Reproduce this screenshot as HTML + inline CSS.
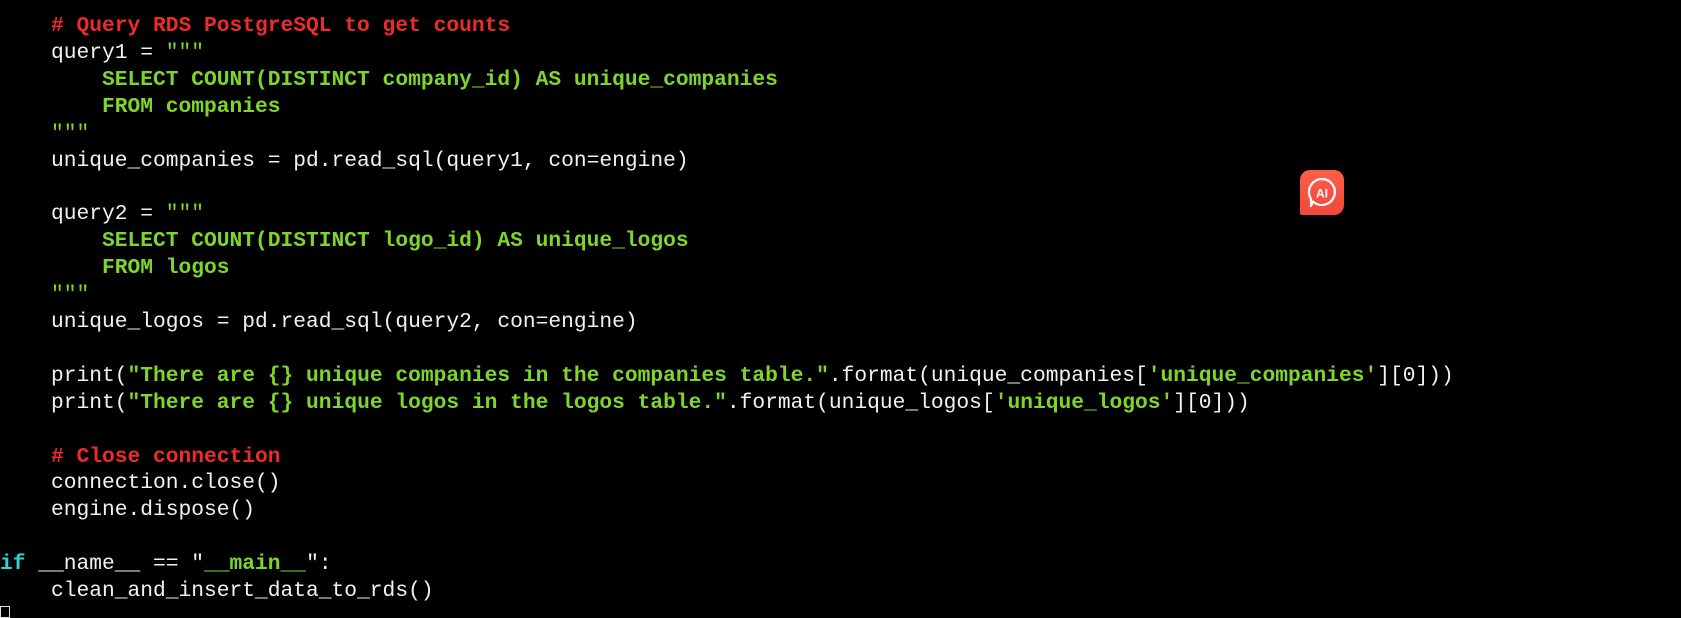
<!DOCTYPE html>
<html><head><meta charset="utf-8"><style>
html,body{margin:0;padding:0;background:#000;width:1681px;height:616px;overflow:hidden}
pre{margin:0;position:absolute;left:0;top:13px;font-family:"Liberation Mono",monospace;font-size:21.25px;line-height:26.9px;color:#f2f2f2;white-space:pre}
.r{color:#ee2b2b;font-weight:bold}
.g{color:#7ed62c;font-weight:bold}
.q{color:#7ed62c}
.c{color:#2fd3d3;font-weight:bold}
.icon{position:absolute;left:1300px;top:170px;width:44px;height:45px;border-radius:10px 10px 10px 2px;background:linear-gradient(180deg,#ff5f4a,#f2473a)}
.cur{position:absolute;left:0;top:606px;width:10px;height:12px;border:1px solid #ddd;box-sizing:border-box}
</style></head><body>
<pre><span class="r">    # Query RDS PostgreSQL to get counts</span>
    query1 = <span class="q">"""</span>
<span class="g">        SELECT COUNT(DISTINCT company_id) AS unique_companies</span>
<span class="g">        FROM companies</span>
<span class="q">    """</span>
    unique_companies = pd.read_sql(query1, con=engine)

    query2 = <span class="q">"""</span>
<span class="g">        SELECT COUNT(DISTINCT logo_id) AS unique_logos</span>
<span class="g">        FROM logos</span>
<span class="q">    """</span>
    unique_logos = pd.read_sql(query2, con=engine)

    print(<span class="g">"There are {} unique companies in the companies table."</span>.format(unique_companies[<span class="g">'unique_companies'</span>][0]))
    print(<span class="g">"There are {} unique logos in the logos table."</span>.format(unique_logos[<span class="g">'unique_logos'</span>][0]))

<span class="r">    # Close connection</span>
    connection.close()
    engine.dispose()

<span class="c">if</span> __name__ == "<span class="g">__main__</span>":
    clean_and_insert_data_to_rds()</pre>
<div class="icon"><svg width="44" height="45" viewBox="0 0 44 45"><path d="M22 9a13 13 0 1 1-9 22.5l-2 4.5v-7A13 13 0 0 1 22 9z" fill="none" stroke="#fff" stroke-width="2.2" stroke-linejoin="round"/><text x="22" y="27.5" text-anchor="middle" font-family="Liberation Sans,sans-serif" font-weight="bold" font-size="12" fill="#fff">AI</text></svg></div>
<div class="cur"></div>
</body></html>
